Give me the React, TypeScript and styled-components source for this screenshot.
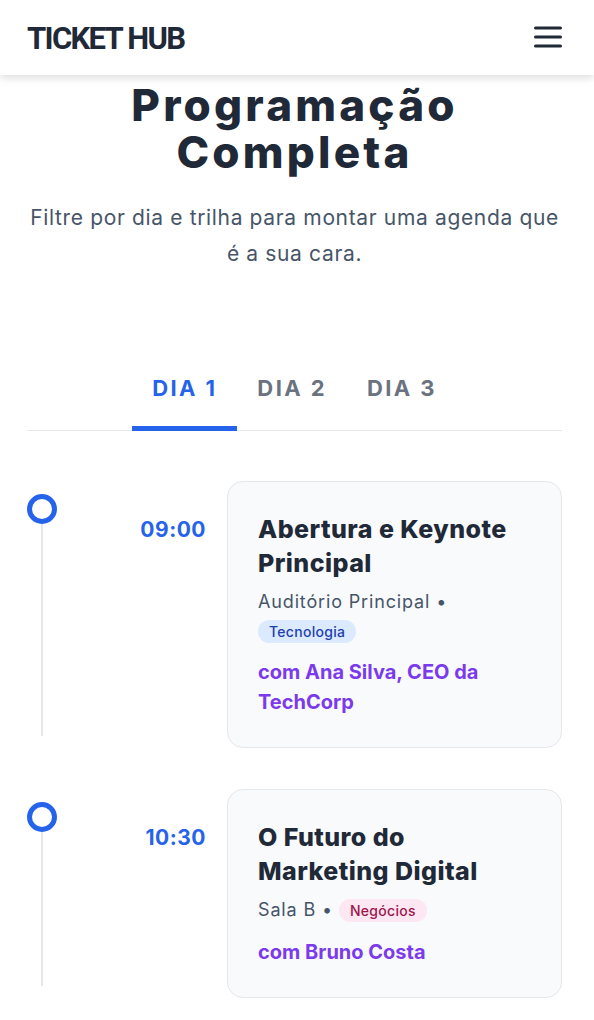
import React, { useState } from "react";
import styled, { createGlobalStyle } from "styled-components";

const GlobalStyle = createGlobalStyle`
  html, body { margin: 0; padding: 0; background: #ffffff; }
  body { font-family: Inter, "Noto Sans", sans-serif; color: #1f2937; }
  * { box-sizing: border-box; }
`;

const Header = styled.header`
  position: sticky;
  top: 0;
  z-index: 10;
  height: 75px;
  display: flex;
  align-items: center;
  justify-content: space-between;
  padding: 0 32px 0 27px;
  background: #ffffff;
  box-shadow: 0 3px 8px rgba(0, 0, 0, 0.13);
`;

const Logo = styled.div`
  font-family: Roboto, "Liberation Sans", sans-serif;
  font-weight: 700;
  font-size: 31px;
  letter-spacing: -1.7px;
  color: #1f2937;
  line-height: 1;
  padding-top: 1px;
`;

const MenuButton = styled.button`
  border: none;
  background: none;
  padding: 0;
  display: flex;
  color: #1f2937;
  cursor: pointer;
`;

const Main = styled.main`
  padding: 0 32px 40px 27px;
`;

const Hero = styled.section`
  text-align: center;
  padding-top: 7px;
`;

const Title = styled.h1`
  margin: 0;
  font-family: Inter, sans-serif;
  font-weight: 800;
  font-size: 44px;
  line-height: 47px;
  letter-spacing: 3.2px;
  color: #1f2937;
`;

const Subtitle = styled.p`
  margin: 24px 0 0;
  font-size: 21px;
  line-height: 36px;
  letter-spacing: 0.65px;
  color: #475569;
`;

const Tabs = styled.nav`
  margin-top: 98px;
  display: flex;
  justify-content: center;
  border-bottom: 1px solid #e5e7eb;
`;

const Tab = styled.button<{ $active?: boolean }>`
  border: none;
  background: none;
  padding: 2px 20px 21px;
  margin-bottom: -1px;
  font-family: Inter, sans-serif;
  font-weight: 700;
  font-size: 22px;
  line-height: 33px;
  letter-spacing: 2.4px;
  color: ${(p) => (p.$active ? "#2563eb" : "#6b7280")};
  border-bottom: 5px solid ${(p) => (p.$active ? "#2563eb" : "transparent")};
  cursor: pointer;
`;

const Timeline = styled.ol`
  list-style: none;
  margin: 50px 0 0;
  padding: 0;
  display: flex;
  flex-direction: column;
  gap: 41px;
`;

const Item = styled.li`
  display: grid;
  grid-template-columns: 30px 1fr 335px;
  column-gap: 0;
`;

const Marker = styled.div`
  display: flex;
  flex-direction: column;
  align-items: center;
  padding: 13px 0 12px;
  margin-left: -1px;
`;

const Dot = styled.span`
  width: 30px;
  height: 30px;
  border-radius: 50%;
  border: 5px solid #2563eb;
  background: #ffffff;
  flex-shrink: 0;
`;

const Line = styled.span`
  flex: 1;
  width: 2px;
  background: #e5e7eb;
`;

const Time = styled.div`
  text-align: right;
  padding: 32px 21px 0 0;
  font-weight: 700;
  font-size: 21px;
  line-height: 34px;
  letter-spacing: 0.5px;
  color: #2563eb;
`;

const Card = styled.article`
  background: #f8fafc;
  border: 1px solid #e5e7eb;
  border-radius: 16px;
  padding: 30px;
`;

const CardTitle = styled.h3`
  margin: 0;
  font-weight: 800;
  font-size: 25px;
  line-height: 34px;
  letter-spacing: 0.45px;
  color: #1f2937;
`;

const Meta = styled.p`
  margin: 8px 0 0;
  font-size: 18px;
  line-height: 28.5px;
  letter-spacing: 0.85px;
  color: #475569;
`;

const Tag = styled.span<{ $bg: string; $fg: string }>`
  display: inline-block;
  padding: 3px 11px;
  border-radius: 999px;
  font-size: 14px;
  line-height: 17px;
  font-weight: 500;
  letter-spacing: 0.3px;
  background: ${(p) => p.$bg};
  color: ${(p) => p.$fg};
`;

const Speaker = styled.p`
  margin: 12px 0 0;
  font-weight: 700;
  font-size: 20px;
  line-height: 30px;
  color: #7c3aed;
`;

const tracks: Record<string, { bg: string; fg: string }> = {
  Tecnologia: { bg: "#dbeafe", fg: "#1e40af" },
  Negócios: { bg: "#fce7f3", fg: "#9d174d" },
};

const sessions = [
  {
    time: "09:00",
    title: "Abertura e Keynote Principal",
    room: "Auditório Principal",
    track: "Tecnologia",
    speaker: "com Ana Silva, CEO da TechCorp",
  },
  {
    time: "10:30",
    title: "O Futuro do Marketing Digital",
    room: "Sala B",
    track: "Negócios",
    speaker: "com Bruno Costa",
  },
];

const MenuIcon = () => (
  <svg width="28" height="23" viewBox="0 0 28 23" fill="none" stroke="currentColor" strokeWidth="3" strokeLinecap="round">
    <line x1="1.5" y1="2" x2="26.5" y2="2" />
    <line x1="1.5" y1="11" x2="26.5" y2="11" />
    <line x1="1.5" y1="20" x2="26.5" y2="20" />
  </svg>
);

export default function App() {
  const [day, setDay] = useState(1);
  return (
    <>
      <GlobalStyle />
      <Header>
        <Logo>TICKET HUB</Logo>
        <MenuButton aria-label="Menu">
          <MenuIcon />
        </MenuButton>
      </Header>
      <Main>
        <Hero>
          <Title>
            Programação
            <br />
            Completa
          </Title>
          <Subtitle>Filtre por dia e trilha para montar uma agenda que é a sua cara.</Subtitle>
        </Hero>
        <Tabs>
          {[1, 2, 3].map((d) => (
            <Tab key={d} $active={day === d} onClick={() => setDay(d)}>
              DIA {d}
            </Tab>
          ))}
        </Tabs>
        <Timeline>
          {sessions.map((s) => (
            <Item key={s.time}>
              <Marker>
                <Dot />
                <Line />
              </Marker>
              <Time>{s.time}</Time>
              <Card>
                <CardTitle>{s.title}</CardTitle>
                <Meta>
                  {s.room} •{" "}
                  <Tag $bg={tracks[s.track].bg} $fg={tracks[s.track].fg}>
                    {s.track}
                  </Tag>
                </Meta>
                <Speaker>{s.speaker}</Speaker>
              </Card>
            </Item>
          ))}
        </Timeline>
      </Main>
    </>
  );
}
